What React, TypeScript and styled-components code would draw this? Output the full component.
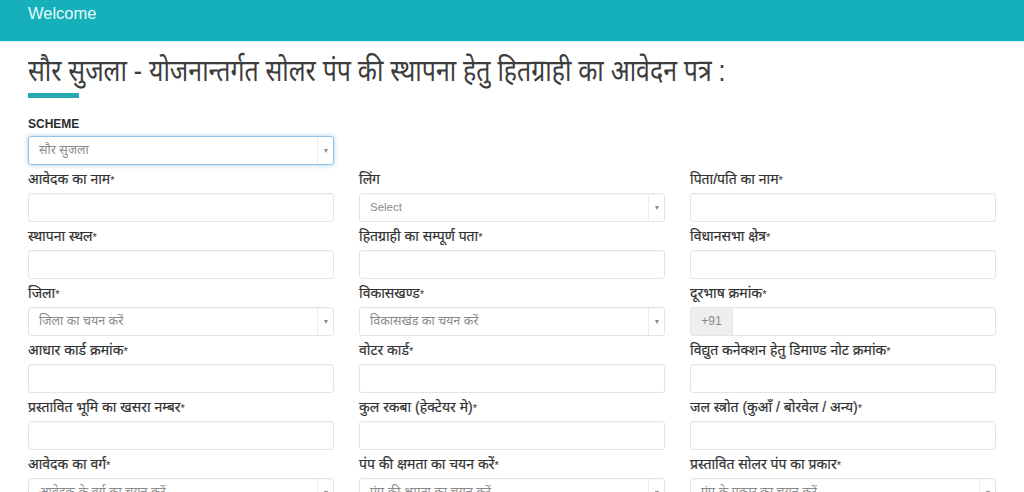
import React from "react";
import styled, { createGlobalStyle } from "styled-components";

const Global = createGlobalStyle`
  html, body { margin: 0; padding: 0; background: #fff; height: 492px; overflow: hidden; }
  body { font-family: "Liberation Sans", "Noto Sans", sans-serif; }
`;
const Header = styled.header`
  height: 42px; background: #15b0b9; color: #e4fbfb; font-size: 16.5px;
  line-height: 17px; padding: 5px 28px 0; box-sizing: border-box;
  border-bottom: 1px solid #d8f4f6;
`;
const Main = styled.main`
  padding: 0 0 0 28px; width: 1024px; box-sizing: border-box;
`;
const Title = styled.h1`
  margin: 10px 0 0; font-size: 30px; line-height: 38px; font-weight: 400; color: #3c3c3c;
  white-space: nowrap; height: 40px;
  transform: scaleX(0.829); transform-origin: left center;
`;
const Accent = styled.div`
  width: 51px; height: 5px; background: #27a9b2; margin-top: 1px;
`;
const SchemeLabel = styled.label`
  display: block; margin-top: 19px; font-size: 12px; line-height: 14px; font-weight: 700; color: #2c2c2c;
`;
const SchemeRow = styled.div`
  width: 306px; margin-top: 5px;
`;
const Grid = styled.div`
  display: grid; grid-template-columns: repeat(3, 306px); column-gap: 25px;
`;
const Field = styled.div`
  height: 57px; display: flex; flex-direction: column;
`;
const FieldLabel = styled.label`
  height: 28px; padding-top: 6px; box-sizing: border-box; font-size: 14px; line-height: 16px;
  color: #333; white-space: nowrap; -webkit-text-stroke: 0.2px #333;
`;
const Star = styled.span`
  font-size: 11px; -webkit-text-stroke: 0;
`;
const Box = styled.div<{ $focus?: boolean }>`
  height: 29px; box-sizing: border-box; display: flex; align-items: stretch;
  background: #fff; border-radius: 3px; border: 1px solid ${p => (p.$focus ? "#8fc4e6" : "#e4e4e4")};
  box-shadow: ${p => (p.$focus ? "0 0 5px rgba(102,175,233,.6)" : "inset 0 1px 1px rgba(0,0,0,.03)")};
  overflow: hidden;
`;
const Value = styled.span<{ $latin?: boolean }>`
  flex: 1; padding-left: 10px; font-size: ${p => (p.$latin ? "11.5px" : "12.5px")}; line-height: 27px; color: #8a8a8a;
  white-space: nowrap; overflow: hidden;
`;
const Arrow = styled.span`
  width: 15px; border-left: 1px solid #ececec; display: flex; align-items: center; justify-content: center;
  &::after { content: ""; border-left: 2.5px solid transparent; border-right: 2.5px solid transparent; border-top: 4px solid #8a8a8a; }
`;
const Addon = styled.span`
  width: 41px; background: #eee; color: #888; font-size: 12px; line-height: 27px; text-align: center;
  border-right: 1px solid #e4e4e4;
`;

type F = { label: string; req?: boolean; select?: string; latin?: boolean; addon?: string };
const fields: F[] = [
  { label: "आवेदक का नाम", req: true },
  { label: "लिंग", select: "Select", latin: true },
  { label: "पिता/पति का नाम", req: true },
  { label: "स्थापना स्थल", req: true },
  { label: "हितग्राही का सम्पूर्ण पता", req: true },
  { label: "विधानसभा क्षेत्र", req: true },
  { label: "जिला", req: true, select: "जिला का चयन करें" },
  { label: "विकासखण्ड", req: true, select: "विकासखंड का चयन करें" },
  { label: "दूरभाष क्रमांक", req: true, addon: "+91" },
  { label: "आधार कार्ड क्रमांक", req: true },
  { label: "वोटर कार्ड", req: true },
  { label: "विद्युत कनेक्शन हेतु डिमाण्ड नोट क्रमांक", req: true },
  { label: "प्रस्तावित भूमि का खसरा नम्बर", req: true },
  { label: "कुल रकबा (हेक्टेयर मे)", req: true },
  { label: "जल स्त्रोत (कुआँ / बोरवेल / अन्य)", req: true },
  { label: "आवेदक का वर्ग", req: true, select: "आवेदक के वर्ग का चयन करें" },
  { label: "पंप की क्षमता का चयन करें", req: true, select: "पंप की क्षमता का चयन करें" },
  { label: "प्रस्तावित सोलर पंप का प्रकार", req: true, select: "पंप के प्रकार का चयन करें" },
];

export default function App() {
  return (
    <>
      <Global />
      <Header>Welcome</Header>
      <Main>
        <Title>सौर सुजला - योजनान्तर्गत सोलर पंप की स्थापना हेतु हितग्राही का आवेदन पत्र :</Title>
        <Accent />
        <SchemeLabel>SCHEME</SchemeLabel>
        <SchemeRow>
          <Box $focus>
            <Value>सौर सुजला</Value>
            <Arrow />
          </Box>
        </SchemeRow>
        <Grid>
          {fields.map(f => (
            <Field key={f.label}>
              <FieldLabel>{f.label}{f.req && <Star>*</Star>}</FieldLabel>
              <Box>
                {f.addon && <Addon>{f.addon}</Addon>}
                {f.select && <Value $latin={f.latin}>{f.select}</Value>}
                {f.select && <Arrow />}
              </Box>
            </Field>
          ))}
        </Grid>
      </Main>
    </>
  );
}
